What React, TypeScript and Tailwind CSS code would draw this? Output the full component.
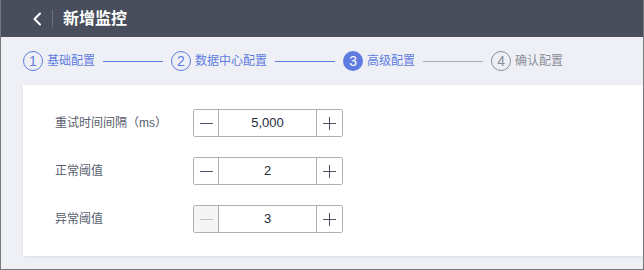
import React from 'react';

const steps = [
  { n: 1, label: '基础配置', state: 'done' },
  { n: 2, label: '数据中心配置', state: 'done' },
  { n: 3, label: '高级配置', state: 'active' },
  { n: 4, label: '确认配置', state: 'todo' },
];

const fields = [
  { label: '重试时间间隔（ms）', value: '5,000', minDisabled: false },
  { label: '正常阈值', value: '2', minDisabled: false },
  { label: '异常阈值', value: '3', minDisabled: true },
];

function StepCircle({ n, state }: { n: number; state: string }) {
  if (state === 'active') {
    return (
      <span className="w-5 h-5 rounded-full bg-[#5e7ce0] text-white flex items-center justify-center text-[14px] leading-none">
        {n}
      </span>
    );
  }
  const c = state === 'done' ? 'border-[#5e7ce0] text-[#5e7ce0]' : 'border-[#8a8e99] text-[#8a8e99]';
  return (
    <span className={`w-5 h-5 rounded-full border flex items-center justify-center text-[14px] leading-none ${c}`}>
      {n}
    </span>
  );
}

function Stepper({ value, minDisabled }: { value: string; minDisabled: boolean }) {
  return (
    <div className="flex h-[28px] w-[150px] border border-[#adb0b8] rounded-[2px] overflow-hidden">
      <button
        className={`w-[25px] flex items-center justify-center border-r border-[#adb0b8] ${
          minDisabled ? 'bg-[#f5f5f6]' : 'bg-white'
        }`}
      >
        <span className={`block w-[13px] h-px ${minDisabled ? 'bg-[#c2c4ca]' : 'bg-[#4f5464]'}`} />
      </button>
      <div className="flex-1 flex items-center justify-center text-[13px] text-[#252b3a]">{value}</div>
      <button className="w-[26px] flex items-center justify-center border-l border-[#adb0b8] bg-white relative">
        <span className="block w-[13px] h-px bg-[#4f5464]" />
        <span className="absolute block w-px h-[13px] bg-[#4f5464]" />
      </button>
    </div>
  );
}

export default function App() {
  return (
    <div className="w-[644px] h-[270px] overflow-hidden flex flex-col bg-[#eef0f5] border-x border-b border-[#76787c] font-['Liberation_Sans','Noto_Sans_CJK_SC',sans-serif]">
      <header className="h-[37px] shrink-0 bg-[#484e5c] flex items-center pl-[31px]">
        <svg width="10" height="14" viewBox="0 0 10 14" fill="none">
          <path d="M8 1.5 L2.5 7 L8 12.5" stroke="white" strokeWidth="2" strokeLinecap="round" strokeLinejoin="round" />
        </svg>
        <span className="ml-[10px] w-px h-[17px] bg-[#6b7080]" />
        <span className="ml-[10px] text-white text-[16px] font-bold">新增监控</span>
      </header>

      <div className="h-[48px] shrink-0 flex items-center pl-[22px]">
        {steps.map((s, i) => (
          <div key={s.n} className="flex items-center">
            <StepCircle n={s.n} state={s.state} />
            <span className={`ml-1 text-[12px] ${s.state === 'todo' ? 'text-[#8a8e99]' : 'text-[#5e7ce0]'}`}>
              {s.label}
            </span>
            {i < steps.length - 1 && (
              <span className={`mx-2 w-[60px] h-px ${i < 2 ? 'bg-[#5e7ce0]' : 'bg-[#adb0b8]'}`} />
            )}
          </div>
        ))}
      </div>

      <div className="ml-[22px] h-[171px] bg-white shadow-[0_1px_3px_rgba(0,0,0,0.08)] pt-6 pl-8 flex flex-col gap-5">
        {fields.map((f) => (
          <div key={f.label} className="flex items-center">
            <span className="w-[138px] text-[12px] text-[#575d6c]">{f.label}</span>
            <Stepper value={f.value} minDisabled={f.minDisabled} />
          </div>
        ))}
      </div>
    </div>
  );
}
